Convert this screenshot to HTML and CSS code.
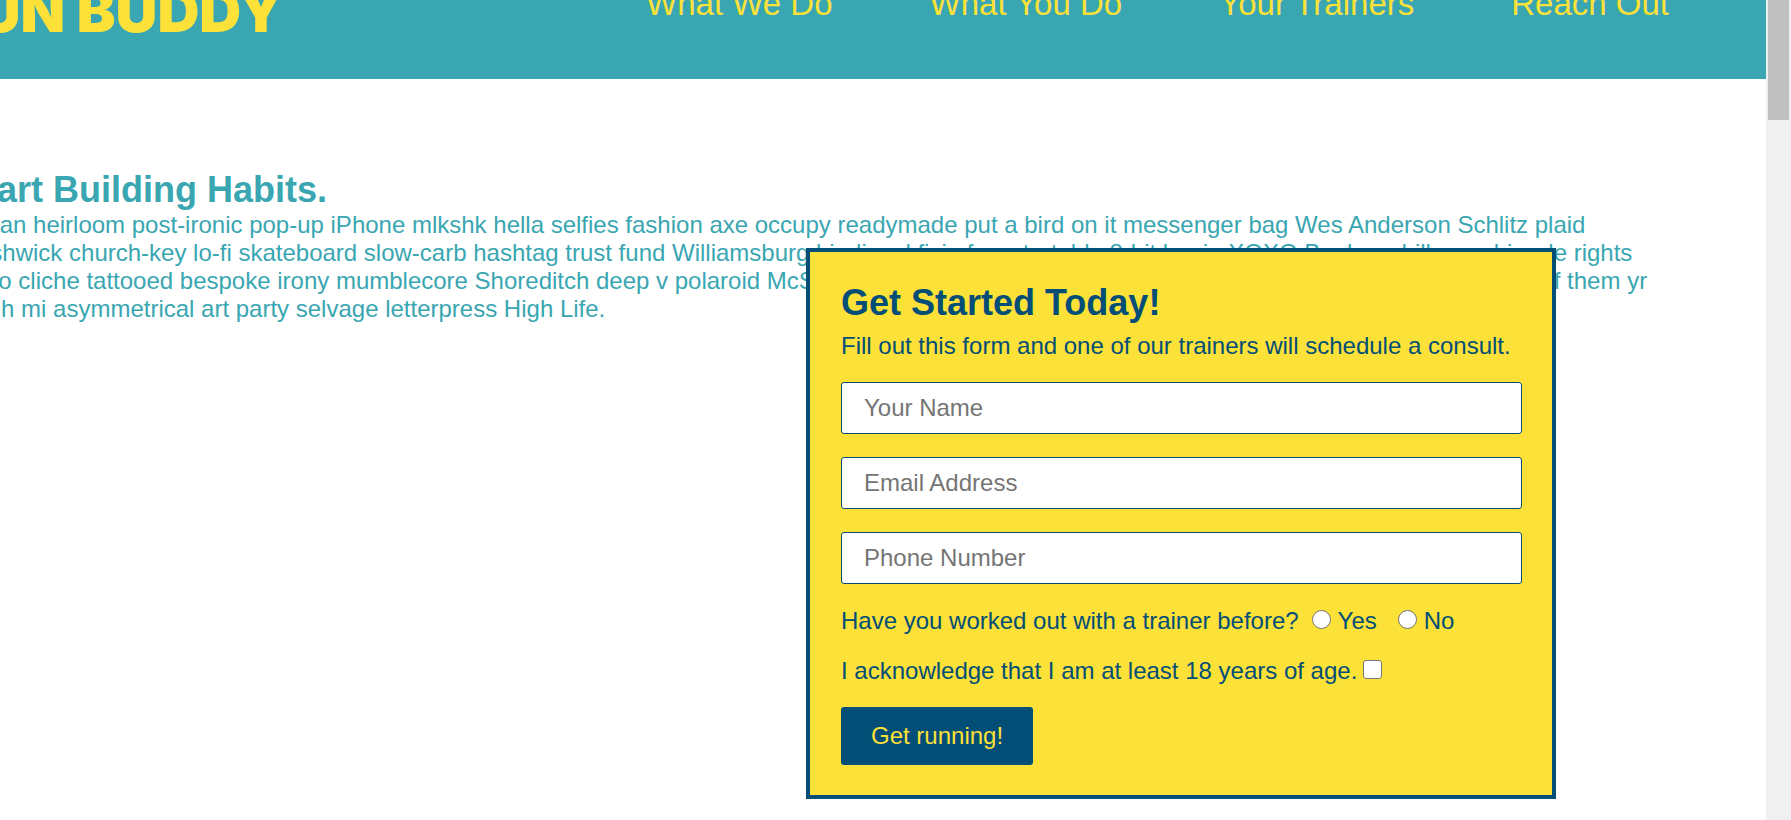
FILE: index.html
```html
<!DOCTYPE html>
<html lang="en">
<head>
<meta charset="utf-8">
<title>Run Buddy</title>
<link rel="stylesheet" href="styles.css">
</head>
<body>
<div class="viewport">
  <div class="page">
    <header class="header">
      <h1 class="logo">RUN BUDDY</h1>
      <nav>
        <ul class="nav-list">
          <li><a href="#what-we-do">What We Do</a></li>
          <li><a href="#what-you-do">What You Do</a></li>
          <li><a href="#your-trainers">Your Trainers</a></li>
          <li><a href="#reach-out">Reach Out</a></li>
        </ul>
      </nav>
    </header>
    <section class="hero">
      <div class="hero-cta">
        <h2>Start Building Habits.</h2>
        <p>vegan heirloom post-ironic pop-up iPhone mlkshk hella selfies fashion axe occupy readymade put a bird on it messenger bag Wes Anderson Schlitz plaid<br>
        Bushwick church-key lo-fi skateboard slow-carb hashtag trust fund Williamsburg biodiesel fixie farm-to-table 8-bit banjo XOXO Banksy chillwave bicycle rights<br>
        Taco cliche tattooed bespoke irony mumblecore Shoreditch deep v polaroid McSweeney's forage pickled, you probably haven't heard of them, heard of them yr<br>
        banh mi asymmetrical art party selvage letterpress High Life.</p>
      </div>
      <form class="hero-form">
        <h3>Get Started Today!</h3>
        <p>Fill out this form and one of our trainers will schedule a consult.</p>
        <input class="form-input" type="text" placeholder="Your Name" aria-label="Your Name">
        <input class="form-input" type="email" placeholder="Email Address" aria-label="Email Address">
        <input class="form-input" type="tel" placeholder="Phone Number" aria-label="Phone Number">
        <div class="question">
          <span>Have you worked out with a trainer before?</span>
          <span class="choice"><input type="radio" name="trainer" id="yes"><label for="yes">Yes</label></span>
          <span class="choice"><input type="radio" name="trainer" id="no"><label for="no">No</label></span>
        </div>
        <div class="acknowledge">
          <label for="age">I acknowledge that I am at least 18 years of age.</label><input type="checkbox" id="age">
        </div>
        <button type="submit">Get running!</button>
      </form>
    </section>
  </div>
  <div class="scrollbar"><div class="thumb"></div></div>
</div>
</body>
</html>
```
FILE: styles.css
```css
* {
  box-sizing: border-box;
  margin: 0;
  padding: 0;
}

body {
  font-family: "Liberation Sans", Arial, sans-serif;
  font-size: 24px;
  line-height: 28px;
  color: #39a6b2;
  background: #fff;
}

.viewport {
  display: flex;
  height: 100vh;
  overflow: hidden;
}

/* The page is scrolled slightly right and down inside the viewport. */
.page {
  flex: 1;
  min-width: 0;
  margin: -74px 0 0 -100px;
}

.header {
  display: flex;
  justify-content: space-between;
  align-items: flex-end;
  padding: 55px 97px 38px 40px;
  background: #39a6b2;
}

.logo {
  font-family: Inter, "Liberation Sans", sans-serif;
  font-size: 58px;
  font-weight: 900;
  line-height: 60px;
  color: #fce138;
}

.nav-list {
  display: flex;
  gap: 97px;
  padding-bottom: 18px;
  list-style: none;
}

.nav-list a {
  font-size: 33px;
  line-height: 38px;
  color: #fce138;
  text-decoration: none;
}

.hero {
  position: relative;
  padding: 90px 0 0 61px;
}

.hero-cta {
  white-space: nowrap;
}

.hero-cta h2 {
  font-size: 36px;
  line-height: 42px;
}

.hero-form {
  position: absolute;
  top: 169px;
  right: 210px;
  width: 750px;
  padding: 30px 30px 30px 31px;
  border: 4px solid #024e76;
  background: #fce138;
  color: #024e76;
}

.hero-form h3 {
  font-size: 36px;
  line-height: 42px;
}

.hero-form p {
  margin: 8px 0 22px;
}

.form-input {
  display: block;
  width: 100%;
  height: 52px;
  margin-bottom: 23px;
  padding: 0 22px;
  border: 1px solid #024e76;
  border-radius: 3px;
  background: #fff;
  font: inherit;
  color: #024e76;
}

.form-input::placeholder {
  color: #757575;
  opacity: 1;
}

.question,
.acknowledge {
  display: flex;
  align-items: baseline;
  margin-bottom: 22px;
}

.question {
  gap: 21px;
}

.choice {
  display: flex;
  align-items: baseline;
  gap: 7px;
}

.question span:first-child {
  margin-right: -8px;
}

.acknowledge {
  gap: 6px;
}

input[type="radio"],
input[type="checkbox"] {
  appearance: none;
  width: 19px;
  height: 19px;
  border: 1px solid #767676;
  border-radius: 3px;
  background: #fff;
}

input[type="radio"] {
  border-radius: 50%;
}

input:checked {
  background: #024e76;
}

button {
  display: block;
  padding: 15px 30px;
  border: 0;
  border-radius: 3px;
  background: #024e76;
  color: #fce138;
  font: inherit;
}

.scrollbar {
  width: 25px;
  padding: 0 2px;
  background: #f0f0f0;
}

.thumb {
  height: 120px;
  background: #c0c0c0;
}
```
